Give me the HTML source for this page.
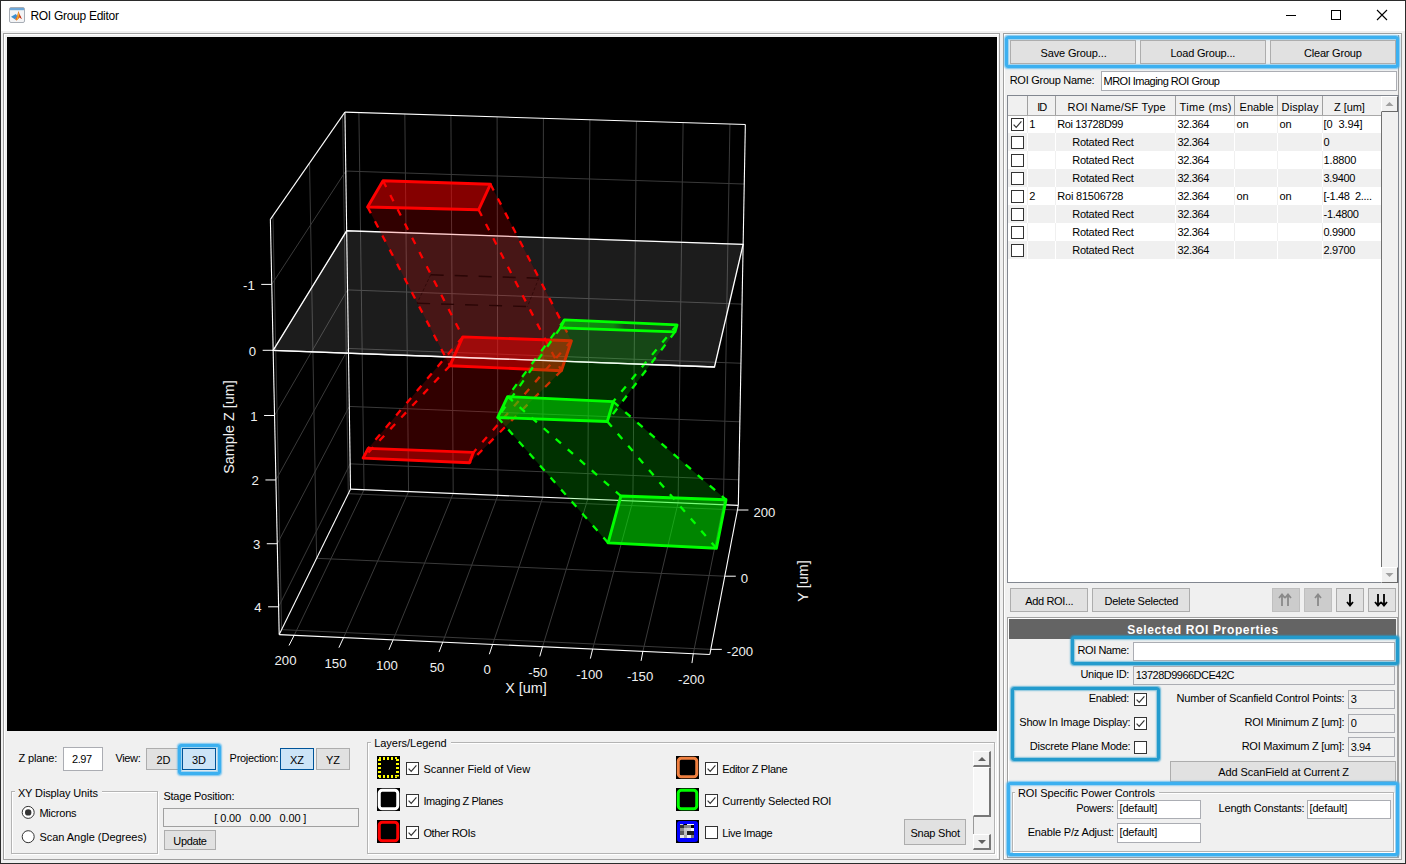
<!DOCTYPE html>
<html><head><meta charset="utf-8"><title>ROI Group Editor</title>
<style>
html,body{margin:0;padding:0;}
body{width:1406px;height:864px;overflow:hidden;position:relative;background:#f0f0f0;font-family:"Liberation Sans",sans-serif;font-size:11px;}
body>div, body>svg, .abs{position:absolute;box-sizing:border-box;}
body>div{box-sizing:border-box;}
svg text{font-family:"Liberation Sans",sans-serif;}
</style></head><body>
<div style="left:0px;top:0px;width:1406px;height:864px;background:#f0f0f0;"></div>
<div style="left:0px;top:0px;width:1406px;height:31px;background:#ffffff;"></div>
<div style="left:0px;top:0px;width:1406px;height:1px;background:#2b2b2b"></div>
<div style="left:0px;top:863px;width:1406px;height:1px;background:#2b2b2b"></div>
<div style="left:0px;top:0px;width:1px;height:864px;background:#2b2b2b"></div>
<div style="left:1405px;top:0px;width:1px;height:864px;background:#2b2b2b"></div>
<svg style="left:9px;top:7px" width="16" height="16"><rect x="0.5" y="0.5" width="15" height="15" rx="1.5" fill="#f3f4f6" stroke="#a7adb5"/><rect x="1" y="1" width="14" height="2.2" fill="#6fa8d8"/><path d="M2 9.8 L6.8 7 L8.3 9 L6.2 12.6 Z" fill="#3d8fd0"/><path d="M6.2 12.6 L8.3 8.6 L9.4 4 L11 8.2 L12.8 12 L10.6 10.6 L7.6 13.6 Z" fill="#d9531e"/><path d="M9.4 4.6 L10.2 8 L8.8 12.5 L7.6 13.6 L7.4 12.4 L8.6 8.6 Z" fill="#f2b130"/><path d="M10.4 7 L12.8 12 L11.2 10.8 Z" fill="#b8281a"/></svg>
<div style="top:9.74px;font-size:12px;line-height:13.404px;color:#000;font-weight:400;white-space:pre;letter-spacing:-0.280px;left:30.40px;">ROI Group Editor</div>
<div style="left:1286px;top:15px;width:10px;height:1px;background:#000"></div>
<div style="left:1331px;top:10px;width:10px;height:10px;box-sizing:border-box;border:1px solid #000"></div>
<svg style="left:1376px;top:9px" width="12" height="12"><path d="M1 1 L11 11 M11 1 L1 11" stroke="#000" stroke-width="1.1"/></svg>
<div style="left:3px;top:33px;width:997px;height:827px;box-sizing:border-box;border:1px solid #a0a0a0;box-shadow:inset 1px 1px 0 #fff"></div>
<div style="left:997px;top:35px;width:1px;height:823px;background:#ffffff"></div>
<svg class="abs" width="990" height="694" viewBox="0 0 990 694" style="position:absolute;left:7px;top:37px;display:block">
<rect width="990" height="694" fill="#000"/>
<g shape-rendering="auto"><line x1="351.89" y1="75.58" x2="357.05" y2="452.74" stroke="#3a3a3a" stroke-width="1" /><line x1="397.83" y1="77.00" x2="401.57" y2="454.60" stroke="#3a3a3a" stroke-width="1" /><line x1="443.91" y1="78.42" x2="446.20" y2="456.46" stroke="#3a3a3a" stroke-width="1" /><line x1="490.10" y1="79.85" x2="490.94" y2="458.33" stroke="#3a3a3a" stroke-width="1" /><line x1="536.42" y1="81.28" x2="535.80" y2="460.20" stroke="#3a3a3a" stroke-width="1" /><line x1="582.86" y1="82.71" x2="580.78" y2="462.08" stroke="#3a3a3a" stroke-width="1" /><line x1="629.43" y1="84.15" x2="625.87" y2="463.97" stroke="#3a3a3a" stroke-width="1" /><line x1="676.12" y1="85.59" x2="671.08" y2="465.86" stroke="#3a3a3a" stroke-width="1" /><line x1="722.93" y1="87.03" x2="716.41" y2="467.75" stroke="#3a3a3a" stroke-width="1" /><line x1="338.79" y1="134.06" x2="737.24" y2="147.03" stroke="#3a3a3a" stroke-width="1" /><line x1="339.68" y1="193.78" x2="736.13" y2="207.38" stroke="#3a3a3a" stroke-width="1" /><line x1="340.56" y1="252.92" x2="735.03" y2="267.12" stroke="#3a3a3a" stroke-width="1" /><line x1="341.43" y1="311.46" x2="733.94" y2="326.26" stroke="#3a3a3a" stroke-width="1" /><line x1="342.29" y1="369.44" x2="732.86" y2="384.82" stroke="#3a3a3a" stroke-width="1" /><line x1="343.14" y1="426.85" x2="731.80" y2="442.80" stroke="#3a3a3a" stroke-width="1" /><line x1="265.92" y1="178.66" x2="274.63" y2="592.65" stroke="#3a3a3a" stroke-width="1" /><line x1="302.54" y1="126.01" x2="309.61" y2="521.32" stroke="#3a3a3a" stroke-width="1" /><line x1="335.61" y1="78.47" x2="341.30" y2="456.69" stroke="#3a3a3a" stroke-width="1" /><line x1="264.76" y1="247.40" x2="338.79" y2="134.06" stroke="#3a3a3a" stroke-width="1" /><line x1="266.16" y1="313.31" x2="339.68" y2="193.78" stroke="#3a3a3a" stroke-width="1" /><line x1="267.55" y1="378.49" x2="340.56" y2="252.92" stroke="#3a3a3a" stroke-width="1" /><line x1="268.91" y1="442.96" x2="341.43" y2="311.46" stroke="#3a3a3a" stroke-width="1" /><line x1="270.27" y1="506.73" x2="342.29" y2="369.44" stroke="#3a3a3a" stroke-width="1" /><line x1="271.61" y1="569.80" x2="343.14" y2="426.85" stroke="#3a3a3a" stroke-width="1" /><line x1="287.21" y1="598.29" x2="357.05" y2="452.74" stroke="#3a3a3a" stroke-width="1" /><line x1="336.59" y1="600.57" x2="401.57" y2="454.60" stroke="#3a3a3a" stroke-width="1" /><line x1="386.11" y1="602.85" x2="446.20" y2="456.46" stroke="#3a3a3a" stroke-width="1" /><line x1="435.78" y1="605.14" x2="490.94" y2="458.33" stroke="#3a3a3a" stroke-width="1" /><line x1="485.58" y1="607.43" x2="535.80" y2="460.20" stroke="#3a3a3a" stroke-width="1" /><line x1="535.54" y1="609.73" x2="580.78" y2="462.08" stroke="#3a3a3a" stroke-width="1" /><line x1="585.63" y1="612.04" x2="625.87" y2="463.97" stroke="#3a3a3a" stroke-width="1" /><line x1="635.87" y1="614.36" x2="671.08" y2="465.86" stroke="#3a3a3a" stroke-width="1" /><line x1="686.26" y1="616.68" x2="716.41" y2="467.75" stroke="#3a3a3a" stroke-width="1" /><line x1="274.63" y1="592.65" x2="703.81" y2="612.36" stroke="#3a3a3a" stroke-width="1" /><line x1="309.61" y1="521.32" x2="717.79" y2="539.20" stroke="#3a3a3a" stroke-width="1" /><line x1="341.30" y1="456.69" x2="730.44" y2="473.00" stroke="#3a3a3a" stroke-width="1" /></g>
<polygon points="339.68,193.78 736.13,207.38 707.49,330.01 266.16,313.31" fill="#ffffff" fill-opacity="0.11" />
<polygon points="339.68,193.78 736.13,207.38 707.49,330.01 266.16,313.31" fill="none" stroke="#ffffff" stroke-width="1.35"/>
<line x1="337.92" y1="75.15" x2="738.34" y2="87.51" stroke="#ffffff" stroke-width="1.1" />
<line x1="337.92" y1="75.15" x2="263.38" y2="182.32" stroke="#ffffff" stroke-width="1.1" />
<line x1="263.38" y1="182.32" x2="272.20" y2="597.60" stroke="#ffffff" stroke-width="1.1" />
<line x1="337.92" y1="75.15" x2="343.52" y2="452.17" stroke="#ffffff" stroke-width="1.1" />
<line x1="738.34" y1="87.51" x2="731.33" y2="468.37" stroke="#ffffff" stroke-width="1.1" />
<line x1="272.20" y1="597.60" x2="702.84" y2="617.44" stroke="#ffffff" stroke-width="1.1" />
<line x1="702.84" y1="617.44" x2="731.33" y2="468.37" stroke="#ffffff" stroke-width="1.1" />
<line x1="343.52" y1="452.17" x2="731.33" y2="468.37" stroke="#ffffff" stroke-width="1.1" />
<line x1="343.52" y1="452.17" x2="272.20" y2="597.60" stroke="#ffffff" stroke-width="1.1" />
<polygon points="376.00,143.80 483.50,147.20 564.40,303.80 455.80,299.90" fill="#ff0000" fill-opacity="0.1" />
<polygon points="483.50,147.20 471.60,172.80 554.40,333.70 564.40,303.80" fill="#ff0000" fill-opacity="0.1" />
<polygon points="471.60,172.80 360.60,170.00 442.90,328.70 554.40,333.70" fill="#ff0000" fill-opacity="0.1" />
<polygon points="360.60,170.00 376.00,143.80 455.80,299.90 442.90,328.70" fill="#ff0000" fill-opacity="0.1" />
<polygon points="455.80,299.90 564.40,303.80 466.40,415.40 361.20,411.40" fill="#ff0000" fill-opacity="0.1" />
<polygon points="564.40,303.80 554.40,333.70 462.50,425.70 466.40,415.40" fill="#ff0000" fill-opacity="0.1" />
<polygon points="554.40,333.70 442.90,328.70 356.10,421.10 462.50,425.70" fill="#ff0000" fill-opacity="0.1" />
<polygon points="442.90,328.70 455.80,299.90 361.20,411.40 356.10,421.10" fill="#ff0000" fill-opacity="0.1" />
<polygon points="376.00,143.80 483.50,147.20 471.60,172.80 360.60,170.00" fill="#ff0000" fill-opacity="0.47" />
<polygon points="455.80,299.90 564.40,303.80 554.40,333.70 442.90,328.70" fill="#ff0000" fill-opacity="0.47" />
<polygon points="361.20,411.40 466.40,415.40 462.50,425.70 356.10,421.10" fill="#ff0000" fill-opacity="0.47" />
<line x1="376.00" y1="143.80" x2="455.80" y2="299.90" stroke="#ff0000" stroke-width="2.3" stroke-dasharray="7 9"/>
<line x1="483.50" y1="147.20" x2="564.40" y2="303.80" stroke="#ff0000" stroke-width="2.3" stroke-dasharray="7 9"/>
<line x1="471.60" y1="172.80" x2="554.40" y2="333.70" stroke="#ff0000" stroke-width="2.3" stroke-dasharray="7 9"/>
<line x1="360.60" y1="170.00" x2="442.90" y2="328.70" stroke="#ff0000" stroke-width="2.3" stroke-dasharray="7 9"/>
<line x1="455.80" y1="299.90" x2="361.20" y2="411.40" stroke="#ff0000" stroke-width="2.3" stroke-dasharray="7 9"/>
<line x1="564.40" y1="303.80" x2="466.40" y2="415.40" stroke="#ff0000" stroke-width="2.3" stroke-dasharray="7 9"/>
<line x1="554.40" y1="333.70" x2="462.50" y2="425.70" stroke="#ff0000" stroke-width="2.3" stroke-dasharray="7 9"/>
<line x1="442.90" y1="328.70" x2="356.10" y2="421.10" stroke="#ff0000" stroke-width="2.3" stroke-dasharray="7 9"/>
<polygon points="376.00,143.80 483.50,147.20 471.60,172.80 360.60,170.00" fill="none" stroke="#ff0000" stroke-width="2.9" stroke-linejoin="round"/>
<polygon points="455.80,299.90 564.40,303.80 554.40,333.70 442.90,328.70" fill="none" stroke="#ff0000" stroke-width="2.9" stroke-linejoin="round"/>
<polygon points="361.20,411.40 466.40,415.40 462.50,425.70 356.10,421.10" fill="none" stroke="#ff0000" stroke-width="2.9" stroke-linejoin="round"/>
<line x1="423.70" y1="237.80" x2="531.80" y2="241.20" stroke="#2a0505" stroke-width="1.4" stroke-dasharray="13 11"/>
<line x1="410.10" y1="266.20" x2="520.40" y2="269.60" stroke="#2a0505" stroke-width="1.4" stroke-dasharray="13 11"/>
<line x1="423.70" y1="237.80" x2="410.10" y2="266.20" stroke="#2a0505" stroke-width="0.7" stroke-dasharray="3 2"/>
<line x1="531.80" y1="241.20" x2="520.40" y2="269.60" stroke="#2a0505" stroke-width="0.7" stroke-dasharray="3 2"/>
<polygon points="557.40,282.90 670.00,287.90 606.20,364.60 500.60,359.60" fill="#00ff00" fill-opacity="0.1" />
<polygon points="670.00,287.90 668.00,294.90 600.30,384.50 606.20,364.60" fill="#00ff00" fill-opacity="0.1" />
<polygon points="668.00,294.90 553.40,290.90 490.70,380.50 600.30,384.50" fill="#00ff00" fill-opacity="0.1" />
<polygon points="553.40,290.90 557.40,282.90 500.60,359.60 490.70,380.50" fill="#00ff00" fill-opacity="0.1" />
<polygon points="500.60,359.60 606.20,364.60 719.00,462.70 613.90,459.00" fill="#00ff00" fill-opacity="0.1" />
<polygon points="606.20,364.60 600.30,384.50 709.40,511.30 719.00,462.70" fill="#00ff00" fill-opacity="0.1" />
<polygon points="600.30,384.50 490.70,380.50 601.10,505.90 709.40,511.30" fill="#00ff00" fill-opacity="0.1" />
<polygon points="490.70,380.50 500.60,359.60 613.90,459.00 601.10,505.90" fill="#00ff00" fill-opacity="0.1" />
<defs><linearGradient id="zf" x1="0" x2="1"><stop offset="0" stop-color="#00ff00" stop-opacity="0.45"/><stop offset="0.45" stop-color="#00ff00" stop-opacity="0.4"/><stop offset="0.55" stop-color="#00ff00" stop-opacity="0.08"/><stop offset="1" stop-color="#00ff00" stop-opacity="0.05"/></linearGradient></defs>
<polygon points="557.40,282.90 670.00,287.90 668.00,294.90 553.40,290.90" fill="url(#zf)"/>
<polygon points="500.60,359.60 606.20,364.60 600.30,384.50 490.70,380.50" fill="#00ff00" fill-opacity="0.47" />
<polygon points="613.90,459.00 719.00,462.70 709.40,511.30 601.10,505.90" fill="#00ff00" fill-opacity="0.47" />
<line x1="557.40" y1="282.90" x2="500.60" y2="359.60" stroke="#00ff00" stroke-width="2.3" stroke-dasharray="7 9"/>
<line x1="670.00" y1="287.90" x2="606.20" y2="364.60" stroke="#00ff00" stroke-width="2.3" stroke-dasharray="7 9"/>
<line x1="668.00" y1="294.90" x2="600.30" y2="384.50" stroke="#00ff00" stroke-width="2.3" stroke-dasharray="7 9"/>
<line x1="553.40" y1="290.90" x2="490.70" y2="380.50" stroke="#00ff00" stroke-width="2.3" stroke-dasharray="7 9"/>
<line x1="500.60" y1="359.60" x2="613.90" y2="459.00" stroke="#00ff00" stroke-width="2.3" stroke-dasharray="7 9"/>
<line x1="606.20" y1="364.60" x2="719.00" y2="462.70" stroke="#00ff00" stroke-width="2.3" stroke-dasharray="7 9"/>
<line x1="600.30" y1="384.50" x2="709.40" y2="511.30" stroke="#00ff00" stroke-width="2.3" stroke-dasharray="7 9"/>
<line x1="490.70" y1="380.50" x2="601.10" y2="505.90" stroke="#00ff00" stroke-width="2.3" stroke-dasharray="7 9"/>
<polygon points="557.40,282.90 670.00,287.90 668.00,294.90 553.40,290.90" fill="none" stroke="#00ff00" stroke-width="2.9" stroke-linejoin="round"/>
<polygon points="500.60,359.60 606.20,364.60 600.30,384.50 490.70,380.50" fill="none" stroke="#00ff00" stroke-width="2.9" stroke-linejoin="round"/>
<polygon points="613.90,459.00 719.00,462.70 709.40,511.30 601.10,505.90" fill="none" stroke="#00ff00" stroke-width="2.9" stroke-linejoin="round"/>
<line x1="266.16" y1="313.31" x2="707.49" y2="330.01" stroke="#ffffff" stroke-width="1.35" stroke-opacity="0.8"/>
<line x1="264.76" y1="247.40" x2="254.26" y2="247.40" stroke="#ffffff" stroke-width="1" />
<text x="247.8" y="252.7" text-anchor="end" font-size="13.2" fill="#f0f0f0">-1</text>
<line x1="266.16" y1="313.31" x2="255.66" y2="313.31" stroke="#ffffff" stroke-width="1" />
<text x="249.2" y="318.6" text-anchor="end" font-size="13.2" fill="#f0f0f0">0</text>
<line x1="267.55" y1="378.49" x2="257.05" y2="378.49" stroke="#ffffff" stroke-width="1" />
<text x="250.5" y="383.8" text-anchor="end" font-size="13.2" fill="#f0f0f0">1</text>
<line x1="268.91" y1="442.96" x2="258.41" y2="442.96" stroke="#ffffff" stroke-width="1" />
<text x="251.9" y="448.3" text-anchor="end" font-size="13.2" fill="#f0f0f0">2</text>
<line x1="270.27" y1="506.73" x2="259.77" y2="506.73" stroke="#ffffff" stroke-width="1" />
<text x="253.3" y="512.0" text-anchor="end" font-size="13.2" fill="#f0f0f0">3</text>
<line x1="271.61" y1="569.80" x2="261.11" y2="569.80" stroke="#ffffff" stroke-width="1" />
<text x="254.6" y="575.1" text-anchor="end" font-size="13.2" fill="#f0f0f0">4</text>
<line x1="287.21" y1="598.29" x2="282.01" y2="608.49" stroke="#ffffff" stroke-width="1" />
<text x="278.5" y="628.3" text-anchor="middle" font-size="13.2" fill="#f0f0f0">200</text>
<line x1="336.59" y1="600.57" x2="331.88" y2="610.67" stroke="#ffffff" stroke-width="1" />
<text x="328.5" y="630.6" text-anchor="middle" font-size="13.2" fill="#f0f0f0">150</text>
<line x1="386.11" y1="602.85" x2="381.89" y2="612.85" stroke="#ffffff" stroke-width="1" />
<text x="379.9" y="632.8" text-anchor="middle" font-size="13.2" fill="#f0f0f0">100</text>
<line x1="435.78" y1="605.14" x2="432.04" y2="615.04" stroke="#ffffff" stroke-width="1" />
<text x="430.1" y="635.1" text-anchor="middle" font-size="13.2" fill="#f0f0f0">50</text>
<line x1="485.58" y1="607.43" x2="482.33" y2="617.23" stroke="#ffffff" stroke-width="1" />
<text x="480.2" y="637.4" text-anchor="middle" font-size="13.2" fill="#f0f0f0">0</text>
<line x1="535.54" y1="609.73" x2="532.77" y2="619.43" stroke="#ffffff" stroke-width="1" />
<text x="530.9" y="639.7" text-anchor="middle" font-size="13.2" fill="#f0f0f0">-50</text>
<line x1="585.63" y1="612.04" x2="583.36" y2="621.64" stroke="#ffffff" stroke-width="1" />
<text x="582.4" y="642.0" text-anchor="middle" font-size="13.2" fill="#f0f0f0">-100</text>
<line x1="635.87" y1="614.36" x2="634.08" y2="623.86" stroke="#ffffff" stroke-width="1" />
<text x="633.1" y="644.4" text-anchor="middle" font-size="13.2" fill="#f0f0f0">-150</text>
<line x1="686.26" y1="616.68" x2="684.96" y2="626.08" stroke="#ffffff" stroke-width="1" />
<text x="684.3" y="646.7" text-anchor="middle" font-size="13.2" fill="#f0f0f0">-200</text>
<line x1="703.81" y1="612.36" x2="714.81" y2="612.36" stroke="#ffffff" stroke-width="1" />
<text x="719.8" y="619.4" text-anchor="start" font-size="13.2" fill="#f0f0f0">-200</text>
<line x1="717.79" y1="539.20" x2="728.79" y2="539.20" stroke="#ffffff" stroke-width="1" />
<text x="733.8" y="546.2" text-anchor="start" font-size="13.2" fill="#f0f0f0">0</text>
<line x1="730.44" y1="473.00" x2="741.44" y2="473.00" stroke="#ffffff" stroke-width="1" />
<text x="746.4" y="480.0" text-anchor="start" font-size="13.2" fill="#f0f0f0">200</text>
<text x="519" y="656" text-anchor="middle" font-size="14.4" fill="#f0f0f0">X [um]</text>
<text transform="translate(227,390) rotate(-90)" text-anchor="middle" font-size="14.4" fill="#f0f0f0">Sample Z [um]</text>
<text transform="translate(801,544) rotate(-90)" text-anchor="middle" font-size="14.4" fill="#f0f0f0">Y [um]</text>
</svg>
<div style="top:752.04px;font-size:11px;line-height:12.287px;color:#000;font-weight:400;white-space:pre;letter-spacing:-0.138px;left:18.50px;">Z plane:</div>
<div style="left:63px;top:747px;width:40px;height:24px;background:#fff;border:1px solid #abadb3;"></div>
<div style="top:752.54px;font-size:11px;line-height:12.287px;color:#000;font-weight:400;white-space:pre;letter-spacing:-0.365px;left:71.90px;">2.97</div>
<div style="top:752.04px;font-size:11px;line-height:12.287px;color:#000;font-weight:400;white-space:pre;letter-spacing:-0.344px;left:115.40px;">View:</div>
<div style="left:146px;top:748px;width:35px;height:22px;background:#e1e1e1;border:1px solid #adadad;"></div>
<div style="top:753.75px;font-size:11px;line-height:12.287px;color:#000;font-weight:400;white-space:pre;letter-spacing:-0.200px;left:-136.60px;width:600px;text-align:center;">2D</div>
<div style="left:178px;top:744px;width:43px;height:31px;box-sizing:border-box;border:3px solid #3cb0f0;border-radius:3px;box-shadow:0 0 1.5px 1px #3cb0f0aa, inset 0 0 1.5px 1px #3cb0f088"></div>
<div style="left:182px;top:748px;width:34px;height:22px;background:#cce4f7;border:1px solid #005499;"></div>
<div style="top:753.75px;font-size:11px;line-height:12.287px;color:#000;font-weight:400;white-space:pre;letter-spacing:-0.200px;left:-101.10px;width:600px;text-align:center;">3D</div>
<div style="top:752.04px;font-size:11px;line-height:12.287px;color:#000;font-weight:400;white-space:pre;letter-spacing:-0.298px;left:229.60px;">Projection:</div>
<div style="left:280px;top:748px;width:34px;height:22px;background:#cce4f7;border:1px solid #005499;"></div>
<div style="top:753.75px;font-size:11px;line-height:12.287px;color:#000;font-weight:400;white-space:pre;letter-spacing:-0.200px;left:-3.10px;width:600px;text-align:center;">XZ</div>
<div style="left:316px;top:748px;width:34px;height:22px;background:#e1e1e1;border:1px solid #adadad;"></div>
<div style="top:753.75px;font-size:11px;line-height:12.287px;color:#000;font-weight:400;white-space:pre;letter-spacing:-0.200px;left:32.90px;width:600px;text-align:center;">YZ</div>
<div style="left:11px;top:791px;width:147px;height:63px;box-sizing:border-box;border:1px solid #b4b4b4;box-shadow:inset 1px 1px 0 #fff, 1px 1px 0 #fff"></div>
<div style="left:14.899999999999999px;top:789px;width:87.0px;height:5px;background:#f0f0f0;"></div>
<div style="top:786.54px;font-size:11px;line-height:12.287px;color:#000;font-weight:400;white-space:pre;letter-spacing:-0.115px;left:17.90px;">XY Display Units</div>
<svg style="left:21px;top:805px" width="15" height="15"><circle cx="7.2" cy="7.4" r="6" fill="#fff" stroke="#333" stroke-width="1"/><circle cx="7.2" cy="7.4" r="3.2" fill="#333"/></svg>
<div style="top:806.64px;font-size:11px;line-height:12.287px;color:#000;font-weight:400;white-space:pre;letter-spacing:-0.217px;left:39.40px;">Microns</div>
<svg style="left:21px;top:829px" width="15" height="15"><circle cx="7.2" cy="7.7" r="6" fill="#fff" stroke="#333" stroke-width="1"/></svg>
<div style="top:830.64px;font-size:11px;line-height:12.287px;color:#000;font-weight:400;white-space:pre;letter-spacing:-0.023px;left:39.40px;">Scan Angle (Degrees)</div>
<div style="top:790.04px;font-size:11px;line-height:12.287px;color:#000;font-weight:400;white-space:pre;letter-spacing:-0.205px;left:163.40px;">Stage Position:</div>
<div style="left:163px;top:808px;width:196px;height:19px;background:#f0f0f0;border:1px solid #a0a0a0;"></div>
<div style="top:811.64px;font-size:11px;line-height:12.287px;color:#000;font-weight:400;white-space:pre;letter-spacing:-0.127px;left:214.30px;">[ 0.00   0.00   0.00 ]</div>
<div style="left:164px;top:830px;width:52px;height:20px;background:#e1e1e1;border:1px solid #adadad;"></div>
<div style="top:834.95px;font-size:11px;line-height:12.287px;color:#000;font-weight:400;white-space:pre;letter-spacing:-0.355px;left:173.30px;">Update</div>
<div style="left:367px;top:742px;width:628px;height:112px;box-sizing:border-box;border:1px solid #b4b4b4;box-shadow:inset 1px 1px 0 #fff, 1px 1px 0 #fff"></div>
<div style="left:371.2px;top:740px;width:79.40000000000003px;height:5px;background:#f0f0f0;"></div>
<div style="top:736.84px;font-size:11px;line-height:12.287px;color:#000;font-weight:400;white-space:pre;letter-spacing:-0.030px;left:374.20px;">Layers/Legend</div>
<svg style="left:377px;top:756px" width="23" height="23"><rect width="23" height="23" fill="#000"/><rect x="6" y="1" width="2" height="3" fill="#ffff00"/><rect x="6" y="19" width="2" height="3" fill="#ffff00"/><rect x="10" y="1" width="2" height="3" fill="#ffff00"/><rect x="10" y="19" width="2" height="3" fill="#ffff00"/><rect x="14" y="1" width="2" height="3" fill="#ffff00"/><rect x="14" y="19" width="2" height="3" fill="#ffff00"/><rect x="1" y="7" width="3" height="2" fill="#ffff00"/><rect x="19" y="7" width="3" height="2" fill="#ffff00"/><rect x="1" y="11" width="3" height="2" fill="#ffff00"/><rect x="19" y="11" width="3" height="2" fill="#ffff00"/><rect x="1" y="15" width="3" height="2" fill="#ffff00"/><rect x="19" y="15" width="3" height="2" fill="#ffff00"/><rect x="2" y="1" width="2" height="2" fill="#ffff00"/><rect x="1" y="3" width="3" height="2" fill="#ffff00"/><rect x="18" y="1" width="2" height="2" fill="#ffff00"/><rect x="19" y="3" width="3" height="2" fill="#ffff00"/><rect x="1" y="19" width="3" height="2" fill="#ffff00"/><rect x="2" y="21" width="2" height="1" fill="#ffff00"/><rect x="18" y="19" width="4" height="1.5" fill="#ffff00"/><rect x="18" y="20.5" width="2" height="1.5" fill="#ffff00"/></svg>
<div style="left:406px;top:762px;width:13px;height:13px;box-sizing:border-box;background:#fff;border:1px solid #333"><svg width="13" height="13" style="position:absolute;left:-1px;top:-1px"><path d="M2.6 6.6 L5.2 9.4 L10.4 3.4" fill="none" stroke="#333" stroke-width="1.2"/></svg></div>
<div style="top:763.14px;font-size:11px;line-height:12.287px;color:#000;font-weight:400;white-space:pre;letter-spacing:-0.005px;left:423.40px;">Scanner Field of View</div>
<svg style="left:377px;top:788px" width="23" height="23"><rect width="23" height="23" fill="#000"/><rect x="2.25" y="2.25" width="18.5" height="18.5" rx="3" fill="none" stroke="#ffffff" stroke-width="3"/></svg>
<div style="left:406px;top:794px;width:13px;height:13px;box-sizing:border-box;background:#fff;border:1px solid #333"><svg width="13" height="13" style="position:absolute;left:-1px;top:-1px"><path d="M2.6 6.6 L5.2 9.4 L10.4 3.4" fill="none" stroke="#333" stroke-width="1.2"/></svg></div>
<div style="top:795.14px;font-size:11px;line-height:12.287px;color:#000;font-weight:400;white-space:pre;letter-spacing:-0.379px;left:423.40px;">Imaging Z Planes</div>
<svg style="left:377px;top:820px" width="23" height="23"><rect width="23" height="23" fill="#000"/><rect x="2.25" y="2.25" width="18.5" height="18.5" rx="3" fill="none" stroke="#ff0000" stroke-width="3"/></svg>
<div style="left:406px;top:826px;width:13px;height:13px;box-sizing:border-box;background:#fff;border:1px solid #333"><svg width="13" height="13" style="position:absolute;left:-1px;top:-1px"><path d="M2.6 6.6 L5.2 9.4 L10.4 3.4" fill="none" stroke="#333" stroke-width="1.2"/></svg></div>
<div style="top:827.14px;font-size:11px;line-height:12.287px;color:#000;font-weight:400;white-space:pre;letter-spacing:-0.367px;left:423.40px;">Other ROIs</div>
<svg style="left:676px;top:756px" width="23" height="23"><rect width="23" height="23" fill="#000"/><rect x="2.25" y="2.25" width="18.5" height="18.5" rx="3" fill="none" stroke="#f08040" stroke-width="3"/></svg>
<div style="left:705px;top:762px;width:13px;height:13px;box-sizing:border-box;background:#fff;border:1px solid #333"><svg width="13" height="13" style="position:absolute;left:-1px;top:-1px"><path d="M2.6 6.6 L5.2 9.4 L10.4 3.4" fill="none" stroke="#333" stroke-width="1.2"/></svg></div>
<div style="top:763.44px;font-size:11px;line-height:12.287px;color:#000;font-weight:400;white-space:pre;letter-spacing:-0.322px;left:722.20px;">Editor Z Plane</div>
<svg style="left:676px;top:788px" width="23" height="23"><rect width="23" height="23" fill="#000"/><rect x="2.25" y="2.25" width="18.5" height="18.5" rx="3" fill="none" stroke="#00ff00" stroke-width="3"/></svg>
<div style="left:705px;top:794px;width:13px;height:13px;box-sizing:border-box;background:#fff;border:1px solid #333"><svg width="13" height="13" style="position:absolute;left:-1px;top:-1px"><path d="M2.6 6.6 L5.2 9.4 L10.4 3.4" fill="none" stroke="#333" stroke-width="1.2"/></svg></div>
<div style="top:795.44px;font-size:11px;line-height:12.287px;color:#000;font-weight:400;white-space:pre;letter-spacing:-0.185px;left:722.20px;">Currently Selected ROI</div>
<svg style="left:676px;top:820px" width="23" height="23"><rect width="23" height="23" fill="#000"/><rect x="1" y="1" width="21" height="21" rx="3" fill="#0000ff"/><rect x="4" y="5" width="4" height="3" fill="rgb(50,50,50)"/><rect x="8" y="5" width="3" height="3" fill="rgb(130,130,130)"/><rect x="11" y="5" width="4" height="3" fill="rgb(140,140,140)"/><rect x="15" y="5" width="3" height="3" fill="rgb(0,0,0)"/><rect x="4" y="8" width="4" height="3" fill="rgb(140,140,140)"/><rect x="8" y="8" width="3" height="3" fill="rgb(200,200,200)"/><rect x="11" y="8" width="4" height="3" fill="rgb(210,210,210)"/><rect x="15" y="8" width="3" height="3" fill="rgb(250,250,250)"/><rect x="4" y="11" width="4" height="4" fill="rgb(90,90,90)"/><rect x="8" y="11" width="3" height="4" fill="rgb(190,190,190)"/><rect x="11" y="11" width="4" height="4" fill="rgb(30,30,30)"/><rect x="15" y="11" width="3" height="4" fill="rgb(30,30,30)"/><rect x="4" y="15" width="4" height="3" fill="rgb(230,230,230)"/><rect x="8" y="15" width="3" height="3" fill="rgb(170,170,170)"/><rect x="11" y="15" width="4" height="3" fill="rgb(240,240,240)"/><rect x="15" y="15" width="3" height="3" fill="rgb(120,120,120)"/><rect x="4" y="4" width="3" height="1" fill="#c8c8c8"/><rect x="8" y="4" width="3" height="1" fill="#000"/><rect x="11" y="4" width="7" height="1" fill="#fff"/></svg>
<div style="left:705px;top:826px;width:13px;height:13px;box-sizing:border-box;background:#fff;border:1px solid #333"></div>
<div style="top:827.44px;font-size:11px;line-height:12.287px;color:#000;font-weight:400;white-space:pre;letter-spacing:-0.366px;left:722.20px;">Live Image</div>
<div style="left:904px;top:819px;width:62px;height:26px;background:#e1e1e1;border:1px solid #adadad;"></div>
<div style="top:826.75px;font-size:11px;line-height:12.287px;color:#000;font-weight:400;white-space:pre;letter-spacing:-0.221px;left:910.40px;">Snap Shot</div>
<div style="left:973px;top:751px;width:18px;height:99px;background:#f0f0f0"></div>
<div style="left:973px;top:751px;width:18px;height:16px;box-sizing:border-box;background:#f0f0f0;border-right:2px solid #777;border-bottom:2px solid #777;border-top:1px solid #fff;border-left:1px solid #fff"></div>
<svg style="left:977px;top:755px" width="10" height="8"><path d="M1 6 L5 2 L9 6 Z" fill="#606060"/></svg>
<div style="left:973px;top:767px;width:18px;height:50px;box-sizing:border-box;background:#f7f7f7;border-right:2px solid #777;border-bottom:2px solid #777;border-top:1px solid #fff;border-left:1px solid #fff"></div>
<div style="left:973px;top:817px;width:1px;height:17px;background:#9a9a9a"></div>
<div style="left:973px;top:834px;width:18px;height:16px;box-sizing:border-box;background:#f0f0f0;border-right:2px solid #777;border-bottom:2px solid #777;border-top:1px solid #fff;border-left:1px solid #fff"></div>
<svg style="left:977px;top:838px" width="10" height="8"><path d="M1 2 L5 6 L9 2 Z" fill="#606060"/></svg>
<div style="left:1003px;top:33px;width:399px;height:827px;box-sizing:border-box;border:1px solid #a0a0a0;box-shadow:inset 1px 1px 0 #fff"></div>
<div style="left:1398px;top:35px;width:1px;height:823px;background:#a0a0a0"></div>
<div style="left:1005px;top:36px;width:394px;height:32px;box-sizing:border-box;border:3px solid #3cb0f0;border-radius:3px;box-shadow:0 0 1.5px 1px #3cb0f0aa, inset 0 0 1.5px 1px #3cb0f088"></div>
<div style="left:1010px;top:40px;width:126px;height:24px;background:#e1e1e1;border:1px solid #adadad;"></div>
<div style="top:46.75px;font-size:11px;line-height:12.287px;color:#000;font-weight:400;white-space:pre;letter-spacing:-0.139px;left:1040.50px;">Save Group...</div>
<div style="left:1140px;top:40px;width:126px;height:24px;background:#e1e1e1;border:1px solid #adadad;"></div>
<div style="top:46.75px;font-size:11px;line-height:12.287px;color:#000;font-weight:400;white-space:pre;letter-spacing:-0.197px;left:1170.40px;">Load Group...</div>
<div style="left:1270px;top:40px;width:126px;height:24px;background:#e1e1e1;border:1px solid #adadad;"></div>
<div style="top:46.75px;font-size:11px;line-height:12.287px;color:#000;font-weight:400;white-space:pre;letter-spacing:-0.220px;left:1304.10px;">Clear Group</div>
<div style="top:74.05px;font-size:11px;line-height:12.287px;color:#000;font-weight:400;white-space:pre;letter-spacing:-0.261px;left:1009.70px;">ROI Group Name:</div>
<div style="left:1101px;top:71px;width:296px;height:20px;background:#fff;border:1px solid #abadb3;"></div>
<div style="top:74.55px;font-size:11px;line-height:12.287px;color:#000;font-weight:400;white-space:pre;letter-spacing:-0.508px;left:1103.50px;">MROI Imaging ROI Group</div>
<div style="left:1007px;top:95px;width:392px;height:488px;box-sizing:border-box;background:#fff;border:1px solid #828790"></div>
<div style="left:1008px;top:96px;width:373px;height:19px;background:#f0f0f0;"></div>
<div style="left:1027px;top:96px;width:1px;height:19px;background:#a0a0a0"></div>
<div style="left:1055px;top:96px;width:1px;height:19px;background:#a0a0a0"></div>
<div style="left:1175px;top:96px;width:1px;height:19px;background:#a0a0a0"></div>
<div style="left:1234px;top:96px;width:1px;height:19px;background:#a0a0a0"></div>
<div style="left:1277px;top:96px;width:1px;height:19px;background:#a0a0a0"></div>
<div style="left:1322px;top:96px;width:1px;height:19px;background:#a0a0a0"></div>
<div style="top:100.75px;font-size:11px;line-height:12.287px;color:#000;font-weight:400;white-space:pre;letter-spacing:-1.100px;left:1037.30px;">ID</div>
<div style="top:100.75px;font-size:11px;line-height:12.287px;color:#000;font-weight:400;white-space:pre;letter-spacing:0.156px;left:1067.60px;">ROI Name/SF Type</div>
<div style="top:100.75px;font-size:11px;line-height:12.287px;color:#000;font-weight:400;white-space:pre;letter-spacing:0.342px;left:1179.60px;">Time (ms)</div>
<div style="top:100.75px;font-size:11px;line-height:12.287px;color:#000;font-weight:400;white-space:pre;letter-spacing:-0.033px;left:1239.60px;">Enable</div>
<div style="top:100.75px;font-size:11px;line-height:12.287px;color:#000;font-weight:400;white-space:pre;letter-spacing:0.120px;left:1281.60px;">Display</div>
<div style="top:100.75px;font-size:11px;line-height:12.287px;color:#000;font-weight:400;white-space:pre;letter-spacing:-0.100px;left:1334.10px;">Z [um]</div>
<div style="left:1008px;top:115px;width:373px;height:18px;background:#ffffff;"></div>
<div style="left:1027px;top:115px;width:1px;height:18px;background:#f0f0f0"></div>
<div style="left:1055px;top:115px;width:1px;height:18px;background:#f0f0f0"></div>
<div style="left:1175px;top:115px;width:1px;height:18px;background:#f0f0f0"></div>
<div style="left:1234px;top:115px;width:1px;height:18px;background:#f0f0f0"></div>
<div style="left:1277px;top:115px;width:1px;height:18px;background:#f0f0f0"></div>
<div style="left:1322px;top:115px;width:1px;height:18px;background:#f0f0f0"></div>
<div style="left:1011px;top:118px;width:13px;height:13px;box-sizing:border-box;background:#fff;border:1px solid #333"><svg width="13" height="13" style="position:absolute;left:-1px;top:-1px"><path d="M2.6 6.6 L5.2 9.4 L10.4 3.4" fill="none" stroke="#333" stroke-width="1.2"/></svg></div>
<div style="top:117.55px;font-size:11px;line-height:12.287px;color:#000;font-weight:400;white-space:pre;letter-spacing:-0.200px;left:1029.20px;">1</div>
<div style="top:117.55px;font-size:11px;line-height:12.287px;color:#000;font-weight:400;white-space:pre;letter-spacing:-0.377px;left:1057.30px;">Roi 13728D99</div>
<div style="top:117.55px;font-size:11px;line-height:12.287px;color:#000;font-weight:400;white-space:pre;letter-spacing:-0.332px;left:1177.50px;">32.364</div>
<div style="top:117.55px;font-size:11px;line-height:12.287px;color:#000;font-weight:400;white-space:pre;left:1236.50px;">on</div>
<div style="top:117.55px;font-size:11px;line-height:12.287px;color:#000;font-weight:400;white-space:pre;left:1279.50px;">on</div>
<div style="top:117.55px;font-size:11px;line-height:12.287px;color:#000;font-weight:400;white-space:pre;letter-spacing:-0.096px;left:1323.60px;">[0  3.94]</div>
<div style="left:1008px;top:133px;width:373px;height:18px;background:#f0f0f0;"></div>
<div style="left:1027px;top:133px;width:1px;height:18px;background:#ffffff"></div>
<div style="left:1055px;top:133px;width:1px;height:18px;background:#ffffff"></div>
<div style="left:1175px;top:133px;width:1px;height:18px;background:#ffffff"></div>
<div style="left:1234px;top:133px;width:1px;height:18px;background:#ffffff"></div>
<div style="left:1277px;top:133px;width:1px;height:18px;background:#ffffff"></div>
<div style="left:1322px;top:133px;width:1px;height:18px;background:#ffffff"></div>
<div style="left:1011px;top:136px;width:13px;height:13px;box-sizing:border-box;background:#fff;border:1px solid #333"></div>
<div style="top:135.54px;font-size:11px;line-height:12.287px;color:#000;font-weight:400;white-space:pre;letter-spacing:-0.244px;left:1072.20px;">Rotated Rect</div>
<div style="top:135.54px;font-size:11px;line-height:12.287px;color:#000;font-weight:400;white-space:pre;letter-spacing:-0.332px;left:1177.50px;">32.364</div>
<div style="top:135.54px;font-size:11px;line-height:12.287px;color:#000;font-weight:400;white-space:pre;letter-spacing:-0.350px;left:1323.60px;">0</div>
<div style="left:1008px;top:151px;width:373px;height:18px;background:#ffffff;"></div>
<div style="left:1027px;top:151px;width:1px;height:18px;background:#f0f0f0"></div>
<div style="left:1055px;top:151px;width:1px;height:18px;background:#f0f0f0"></div>
<div style="left:1175px;top:151px;width:1px;height:18px;background:#f0f0f0"></div>
<div style="left:1234px;top:151px;width:1px;height:18px;background:#f0f0f0"></div>
<div style="left:1277px;top:151px;width:1px;height:18px;background:#f0f0f0"></div>
<div style="left:1322px;top:151px;width:1px;height:18px;background:#f0f0f0"></div>
<div style="left:1011px;top:154px;width:13px;height:13px;box-sizing:border-box;background:#fff;border:1px solid #333"></div>
<div style="top:153.54px;font-size:11px;line-height:12.287px;color:#000;font-weight:400;white-space:pre;letter-spacing:-0.244px;left:1072.20px;">Rotated Rect</div>
<div style="top:153.54px;font-size:11px;line-height:12.287px;color:#000;font-weight:400;white-space:pre;letter-spacing:-0.332px;left:1177.50px;">32.364</div>
<div style="top:153.54px;font-size:11px;line-height:12.287px;color:#000;font-weight:400;white-space:pre;letter-spacing:-0.192px;left:1323.60px;">1.8800</div>
<div style="left:1008px;top:169px;width:373px;height:18px;background:#f0f0f0;"></div>
<div style="left:1027px;top:169px;width:1px;height:18px;background:#ffffff"></div>
<div style="left:1055px;top:169px;width:1px;height:18px;background:#ffffff"></div>
<div style="left:1175px;top:169px;width:1px;height:18px;background:#ffffff"></div>
<div style="left:1234px;top:169px;width:1px;height:18px;background:#ffffff"></div>
<div style="left:1277px;top:169px;width:1px;height:18px;background:#ffffff"></div>
<div style="left:1322px;top:169px;width:1px;height:18px;background:#ffffff"></div>
<div style="left:1011px;top:172px;width:13px;height:13px;box-sizing:border-box;background:#fff;border:1px solid #333"></div>
<div style="top:171.54px;font-size:11px;line-height:12.287px;color:#000;font-weight:400;white-space:pre;letter-spacing:-0.244px;left:1072.20px;">Rotated Rect</div>
<div style="top:171.54px;font-size:11px;line-height:12.287px;color:#000;font-weight:400;white-space:pre;letter-spacing:-0.332px;left:1177.50px;">32.364</div>
<div style="top:171.54px;font-size:11px;line-height:12.287px;color:#000;font-weight:400;white-space:pre;letter-spacing:-0.350px;left:1323.60px;">3.9400</div>
<div style="left:1008px;top:187px;width:373px;height:18px;background:#ffffff;"></div>
<div style="left:1027px;top:187px;width:1px;height:18px;background:#f0f0f0"></div>
<div style="left:1055px;top:187px;width:1px;height:18px;background:#f0f0f0"></div>
<div style="left:1175px;top:187px;width:1px;height:18px;background:#f0f0f0"></div>
<div style="left:1234px;top:187px;width:1px;height:18px;background:#f0f0f0"></div>
<div style="left:1277px;top:187px;width:1px;height:18px;background:#f0f0f0"></div>
<div style="left:1322px;top:187px;width:1px;height:18px;background:#f0f0f0"></div>
<div style="left:1011px;top:190px;width:13px;height:13px;box-sizing:border-box;background:#fff;border:1px solid #333"></div>
<div style="top:189.54px;font-size:11px;line-height:12.287px;color:#000;font-weight:400;white-space:pre;letter-spacing:-0.200px;left:1029.20px;">2</div>
<div style="top:189.54px;font-size:11px;line-height:12.287px;color:#000;font-weight:400;white-space:pre;letter-spacing:-0.212px;left:1057.30px;">Roi 81506728</div>
<div style="top:189.54px;font-size:11px;line-height:12.287px;color:#000;font-weight:400;white-space:pre;letter-spacing:-0.332px;left:1177.50px;">32.364</div>
<div style="top:189.54px;font-size:11px;line-height:12.287px;color:#000;font-weight:400;white-space:pre;left:1236.50px;">on</div>
<div style="top:189.54px;font-size:11px;line-height:12.287px;color:#000;font-weight:400;white-space:pre;left:1279.50px;">on</div>
<div style="top:189.54px;font-size:11px;line-height:12.287px;color:#000;font-weight:400;white-space:pre;letter-spacing:-0.350px;left:1323.60px;">[-1.48  2....</div>
<div style="left:1008px;top:205px;width:373px;height:18px;background:#f0f0f0;"></div>
<div style="left:1027px;top:205px;width:1px;height:18px;background:#ffffff"></div>
<div style="left:1055px;top:205px;width:1px;height:18px;background:#ffffff"></div>
<div style="left:1175px;top:205px;width:1px;height:18px;background:#ffffff"></div>
<div style="left:1234px;top:205px;width:1px;height:18px;background:#ffffff"></div>
<div style="left:1277px;top:205px;width:1px;height:18px;background:#ffffff"></div>
<div style="left:1322px;top:205px;width:1px;height:18px;background:#ffffff"></div>
<div style="left:1011px;top:208px;width:13px;height:13px;box-sizing:border-box;background:#fff;border:1px solid #333"></div>
<div style="top:207.54px;font-size:11px;line-height:12.287px;color:#000;font-weight:400;white-space:pre;letter-spacing:-0.244px;left:1072.20px;">Rotated Rect</div>
<div style="top:207.54px;font-size:11px;line-height:12.287px;color:#000;font-weight:400;white-space:pre;letter-spacing:-0.332px;left:1177.50px;">32.364</div>
<div style="top:207.54px;font-size:11px;line-height:12.287px;color:#000;font-weight:400;white-space:pre;letter-spacing:-0.350px;left:1323.60px;">-1.4800</div>
<div style="left:1008px;top:223px;width:373px;height:18px;background:#ffffff;"></div>
<div style="left:1027px;top:223px;width:1px;height:18px;background:#f0f0f0"></div>
<div style="left:1055px;top:223px;width:1px;height:18px;background:#f0f0f0"></div>
<div style="left:1175px;top:223px;width:1px;height:18px;background:#f0f0f0"></div>
<div style="left:1234px;top:223px;width:1px;height:18px;background:#f0f0f0"></div>
<div style="left:1277px;top:223px;width:1px;height:18px;background:#f0f0f0"></div>
<div style="left:1322px;top:223px;width:1px;height:18px;background:#f0f0f0"></div>
<div style="left:1011px;top:226px;width:13px;height:13px;box-sizing:border-box;background:#fff;border:1px solid #333"></div>
<div style="top:225.54px;font-size:11px;line-height:12.287px;color:#000;font-weight:400;white-space:pre;letter-spacing:-0.244px;left:1072.20px;">Rotated Rect</div>
<div style="top:225.54px;font-size:11px;line-height:12.287px;color:#000;font-weight:400;white-space:pre;letter-spacing:-0.332px;left:1177.50px;">32.364</div>
<div style="top:225.54px;font-size:11px;line-height:12.287px;color:#000;font-weight:400;white-space:pre;letter-spacing:-0.350px;left:1323.60px;">0.9900</div>
<div style="left:1008px;top:241px;width:373px;height:18px;background:#f0f0f0;"></div>
<div style="left:1027px;top:241px;width:1px;height:18px;background:#ffffff"></div>
<div style="left:1055px;top:241px;width:1px;height:18px;background:#ffffff"></div>
<div style="left:1175px;top:241px;width:1px;height:18px;background:#ffffff"></div>
<div style="left:1234px;top:241px;width:1px;height:18px;background:#ffffff"></div>
<div style="left:1277px;top:241px;width:1px;height:18px;background:#ffffff"></div>
<div style="left:1322px;top:241px;width:1px;height:18px;background:#ffffff"></div>
<div style="left:1011px;top:244px;width:13px;height:13px;box-sizing:border-box;background:#fff;border:1px solid #333"></div>
<div style="top:243.54px;font-size:11px;line-height:12.287px;color:#000;font-weight:400;white-space:pre;letter-spacing:-0.244px;left:1072.20px;">Rotated Rect</div>
<div style="top:243.54px;font-size:11px;line-height:12.287px;color:#000;font-weight:400;white-space:pre;letter-spacing:-0.332px;left:1177.50px;">32.364</div>
<div style="top:243.54px;font-size:11px;line-height:12.287px;color:#000;font-weight:400;white-space:pre;letter-spacing:-0.350px;left:1323.60px;">2.9700</div>
<div style="left:1008px;top:115px;width:373px;height:1px;background:#a8a8a8"></div>
<div style="left:1381px;top:96px;width:17px;height:486px;background:#f0f0f0;"></div>
<div style="left:1381px;top:112px;width:1px;height:455px;background:#707070"></div>
<div style="left:1381px;top:96px;width:17px;height:16px;box-sizing:border-box;background:#f0f0f0;border-right:1px solid #696969;border-bottom:1px solid #696969;border-left:1px solid #fff;border-top:1px solid #fff"></div>
<svg style="left:1385px;top:101px" width="10" height="7"><path d="M0.5 5 L4.5 1 L8.5 5 Z" fill="#a0a0a0"/></svg>
<div style="left:1381px;top:567px;width:17px;height:16px;box-sizing:border-box;background:#f0f0f0;border-right:1px solid #696969;border-bottom:1px solid #696969;border-left:1px solid #fff;border-top:1px solid #fff"></div>
<svg style="left:1385px;top:572px" width="10" height="7"><path d="M0.5 1 L4.5 5 L8.5 1 Z" fill="#a0a0a0"/></svg>
<div style="left:1010px;top:588px;width:78px;height:24px;background:#e1e1e1;border:1px solid #adadad;"></div>
<div style="top:594.75px;font-size:11px;line-height:12.287px;color:#000;font-weight:400;white-space:pre;letter-spacing:-0.352px;left:1025.30px;">Add ROI...</div>
<div style="left:1092px;top:588px;width:98px;height:24px;background:#e1e1e1;border:1px solid #adadad;"></div>
<div style="top:594.75px;font-size:11px;line-height:12.287px;color:#000;font-weight:400;white-space:pre;letter-spacing:-0.269px;left:1104.60px;">Delete Selected</div>
<div style="left:1272px;top:588px;width:28px;height:24px;background:#cccccc;border:1px solid #bfbfbf;"></div>
<svg style="left:1272px;top:588px" width="28" height="24"><path d="M10 18 V7 M7 10 L10 6.5 L13 10 M16 18 V7 M13 10 L16 6.5 L19 10" fill="none" stroke="#8a8a8a" stroke-width="1.8"/></svg>
<div style="left:1304px;top:588px;width:28px;height:24px;background:#cccccc;border:1px solid #bfbfbf;"></div>
<svg style="left:1304px;top:588px" width="28" height="24"><path d="M14 18 V7 M11 10 L14 6.5 L17 10" fill="none" stroke="#8a8a8a" stroke-width="1.8"/></svg>
<div style="left:1336px;top:588px;width:28px;height:24px;background:#e1e1e1;border:1px solid #adadad;"></div>
<svg style="left:1336px;top:588px" width="28" height="24"><path d="M14 6 V17 M11 14 L14 17.5 L17 14" fill="none" stroke="#000" stroke-width="1.8"/></svg>
<div style="left:1368px;top:588px;width:28px;height:24px;background:#e1e1e1;border:1px solid #adadad;"></div>
<svg style="left:1368px;top:588px" width="28" height="24"><path d="M10 6 V17 M7 14 L10 17.5 L13 14 M16 6 V17 M13 14 L16 17.5 L19 14" fill="none" stroke="#000" stroke-width="1.8"/></svg>
<div style="left:1007px;top:617px;width:391px;height:241px;box-sizing:border-box;border:1px solid #a0a0a0;box-shadow:inset 1px 1px 0 #fff"></div>
<div style="left:1009px;top:619px;width:387px;height:20px;background:#646464;"></div>
<div style="top:623.94px;font-size:12px;line-height:13.404px;color:#fff;font-weight:700;white-space:pre;letter-spacing:0.639px;left:1127.30px;">Selected ROI Properties</div>
<div style="left:1071px;top:636px;width:328px;height:29px;box-sizing:border-box;border:3px solid #239bcd;border-radius:3px;box-shadow:0 0 1.5px 1px #239bcdaa, inset 0 0 1.5px 1px #239bcd88"></div>
<div style="top:644.04px;font-size:11px;line-height:12.287px;color:#000;font-weight:400;white-space:pre;letter-spacing:-0.388px;left:1077.50px;">ROI Name:</div>
<div style="left:1133px;top:642px;width:262px;height:19px;background:#fff;border:1px solid #abadb3;"></div>
<div style="top:668.04px;font-size:11px;line-height:12.287px;color:#000;font-weight:400;white-space:pre;letter-spacing:-0.342px;left:1080.50px;">Unique ID:</div>
<div style="left:1133px;top:666px;width:262px;height:19px;background:#f0f0f0;border:1px solid #abadb3;"></div>
<div style="top:668.54px;font-size:11px;line-height:12.287px;color:#000;font-weight:400;white-space:pre;letter-spacing:-0.508px;left:1135.70px;">13728D9966DCE42C</div>
<div style="left:1011px;top:687px;width:149px;height:74px;box-sizing:border-box;border:3px solid #239bcd;border-radius:3px;box-shadow:0 0 1.5px 1px #239bcdaa, inset 0 0 1.5px 1px #239bcd88"></div>
<div style="top:691.54px;font-size:11px;line-height:12.287px;color:#000;font-weight:400;white-space:pre;letter-spacing:-0.407px;left:1088.80px;">Enabled:</div>
<div style="left:1134px;top:693px;width:13px;height:13px;box-sizing:border-box;background:#fff;border:1px solid #333"><svg width="13" height="13" style="position:absolute;left:-1px;top:-1px"><path d="M2.6 6.6 L5.2 9.4 L10.4 3.4" fill="none" stroke="#333" stroke-width="1.2"/></svg></div>
<div style="top:715.84px;font-size:11px;line-height:12.287px;color:#000;font-weight:400;white-space:pre;letter-spacing:-0.203px;left:1019.30px;">Show In Image Display:</div>
<div style="left:1134px;top:717px;width:13px;height:13px;box-sizing:border-box;background:#fff;border:1px solid #333"><svg width="13" height="13" style="position:absolute;left:-1px;top:-1px"><path d="M2.6 6.6 L5.2 9.4 L10.4 3.4" fill="none" stroke="#333" stroke-width="1.2"/></svg></div>
<div style="top:739.64px;font-size:11px;line-height:12.287px;color:#000;font-weight:400;white-space:pre;letter-spacing:-0.229px;left:1029.80px;">Discrete Plane Mode:</div>
<div style="left:1134px;top:741px;width:13px;height:13px;box-sizing:border-box;background:#fff;border:1px solid #333"></div>
<div style="top:692.04px;font-size:11px;line-height:12.287px;color:#000;font-weight:400;white-space:pre;letter-spacing:-0.201px;left:1176.60px;">Number of Scanfield Control Points:</div>
<div style="left:1348px;top:690px;width:47px;height:19px;background:#f0f0f0;border:1px solid #abadb3;"></div>
<div style="top:693.04px;font-size:11px;line-height:12.287px;color:#000;font-weight:400;white-space:pre;letter-spacing:-0.200px;left:1350.70px;">3</div>
<div style="top:716.04px;font-size:11px;line-height:12.287px;color:#000;font-weight:400;white-space:pre;letter-spacing:-0.244px;left:1244.50px;">ROI Minimum Z [um]:</div>
<div style="left:1348px;top:714px;width:47px;height:19px;background:#f0f0f0;border:1px solid #abadb3;"></div>
<div style="top:717.04px;font-size:11px;line-height:12.287px;color:#000;font-weight:400;white-space:pre;letter-spacing:-0.200px;left:1350.70px;">0</div>
<div style="top:740.04px;font-size:11px;line-height:12.287px;color:#000;font-weight:400;white-space:pre;letter-spacing:-0.260px;left:1241.70px;">ROI Maximum Z [um]:</div>
<div style="left:1348px;top:737px;width:47px;height:20px;background:#f0f0f0;border:1px solid #abadb3;"></div>
<div style="top:741.04px;font-size:11px;line-height:12.287px;color:#000;font-weight:400;white-space:pre;letter-spacing:-0.398px;left:1350.70px;">3.94</div>
<div style="left:1170px;top:761px;width:226px;height:21px;background:#e1e1e1;border:1px solid #adadad;"></div>
<div style="top:766.25px;font-size:11px;line-height:12.287px;color:#000;font-weight:400;white-space:pre;letter-spacing:-0.103px;left:1218.30px;">Add ScanField at Current Z</div>
<div style="left:1007px;top:782px;width:392px;height:74px;box-sizing:border-box;border:3px solid #3cb0f0;border-radius:3px;box-shadow:0 0 1.5px 1px #3cb0f0aa, inset 0 0 1.5px 1px #3cb0f088"></div>
<div style="left:1012px;top:792px;width:382px;height:60px;box-sizing:border-box;border:1px solid #b4b4b4;box-shadow:inset 1px 1px 0 #fff, 1px 1px 0 #fff"></div>
<div style="left:1015px;top:790px;width:144px;height:5px;background:#f0f0f0;"></div>
<div style="top:786.64px;font-size:11px;line-height:12.287px;color:#000;font-weight:400;white-space:pre;letter-spacing:-0.091px;left:1018.00px;">ROI Specific Power Controls</div>
<div style="top:801.64px;font-size:11px;line-height:12.287px;color:#000;font-weight:400;white-space:pre;letter-spacing:-0.318px;left:1076.30px;">Powers:</div>
<div style="left:1117px;top:800px;width:84px;height:19px;background:#fff;border:1px solid #abadb3;"></div>
<div style="top:802.04px;font-size:11px;line-height:12.287px;color:#000;font-weight:400;white-space:pre;letter-spacing:-0.170px;left:1119.50px;">[default]</div>
<div style="top:801.64px;font-size:11px;line-height:12.287px;color:#000;font-weight:400;white-space:pre;letter-spacing:-0.204px;left:1218.60px;">Length Constants:</div>
<div style="left:1307px;top:800px;width:84px;height:19px;background:#fff;border:1px solid #abadb3;"></div>
<div style="top:802.04px;font-size:11px;line-height:12.287px;color:#000;font-weight:400;white-space:pre;letter-spacing:-0.170px;left:1309.50px;">[default]</div>
<div style="top:825.54px;font-size:11px;line-height:12.287px;color:#000;font-weight:400;white-space:pre;letter-spacing:-0.169px;left:1027.70px;">Enable P/z Adjust:</div>
<div style="left:1117px;top:823px;width:84px;height:20px;background:#fff;border:1px solid #abadb3;"></div>
<div style="top:826.04px;font-size:11px;line-height:12.287px;color:#000;font-weight:400;white-space:pre;letter-spacing:-0.170px;left:1119.50px;">[default]</div>
</body></html>
